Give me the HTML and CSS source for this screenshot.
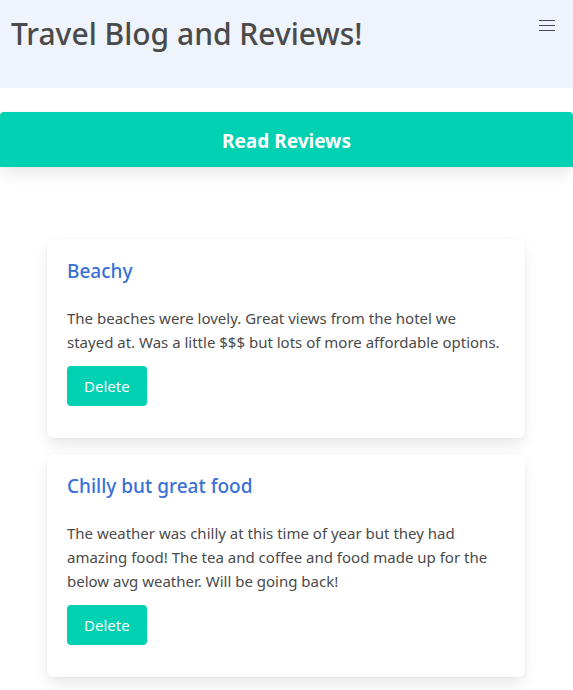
FILE: index.html
```html
<!DOCTYPE html>
<html lang="en">
<head>
<meta charset="utf-8">
<meta name="viewport" content="width=device-width, initial-scale=1">
<title>Travel Blog and Reviews!</title>
<link rel="stylesheet" href="styles.css">
</head>
<body>
<header class="navbar">
  <h1 class="title">Travel Blog and Reviews!</h1>
  <button class="burger" type="button" aria-label="menu"><span></span><span></span><span></span></button>
</header>
<main>
  <h2 class="banner">Read Reviews</h2>
  <section class="reviews">
    <article class="card">
      <h3 class="card-title">Beachy</h3>
      <p class="card-text">The beaches were lovely. Great views from the hotel we stayed at. Was a little $$$ but lots of more affordable options.</p>
      <button class="button" type="button">Delete</button>
    </article>
    <article class="card">
      <h3 class="card-title">Chilly but great food</h3>
      <p class="card-text">The weather was chilly at this time of year but they had amazing food! The tea and coffee and food made up for the below avg weather. Will be going back!</p>
      <button class="button" type="button">Delete</button>
    </article>
  </section>
</main>
</body>
</html>
```
FILE: styles.css
```css
* { box-sizing: border-box; margin: 0; padding: 0; }

body {
  background: #fff;
  color: #4a4a4a;
  font: 400 15px/24px "Segoe UI", "Noto Sans", sans-serif;
}

.navbar {
  display: flex;
  justify-content: space-between;
  align-items: flex-start;
  min-height: 88px;
  padding-left: 11px;
  background: #eff3fc;
}

.title {
  padding-top: 12px;
  font-size: 30px;
  font-weight: 500;
  line-height: 44px;
}

.burger {
  display: flex;
  flex-direction: column;
  align-items: center;
  justify-content: center;
  gap: 4px;
  width: 52px;
  height: 50px;
  border: 0;
  background: none;
  cursor: pointer;
}

.burger span {
  width: 16px;
  height: 1px;
  background: #4a4a4a;
}

.banner {
  margin-top: 24px;
  padding: 16px 20px 12px;
  border-radius: 4px 4px 0 0;
  background: #00d1b2;
  box-shadow: 0 8px 16px -2px rgba(10, 10, 10, 0.1), 0 0 0 1px rgba(10, 10, 10, 0.02);
  color: #fff;
  font-size: 19px;
  font-weight: 700;
  line-height: 27px;
  text-align: center;
}

.reviews {
  display: grid;
  gap: 16px;
  padding: 72px 48px 14px 47px;
}

.card {
  padding: 20px 20px 32px;
  border-radius: 6px;
  background: #fff;
  box-shadow: 0 8px 16px -2px rgba(10, 10, 10, 0.1), 0 0 0 1px rgba(10, 10, 10, 0.02);
}

.card-title {
  margin-bottom: 23px;
  color: #3870d8;
  font-size: 19px;
  font-weight: 500;
  line-height: 24px;
}

.card-text {
  margin-bottom: 12px;
}

.button {
  display: block;
  height: 40px;
  padding: 0 17px;
  border: 0;
  border-radius: 4px;
  background: #00d1b2;
  color: #fff;
  font: inherit;
  cursor: pointer;
}
```
